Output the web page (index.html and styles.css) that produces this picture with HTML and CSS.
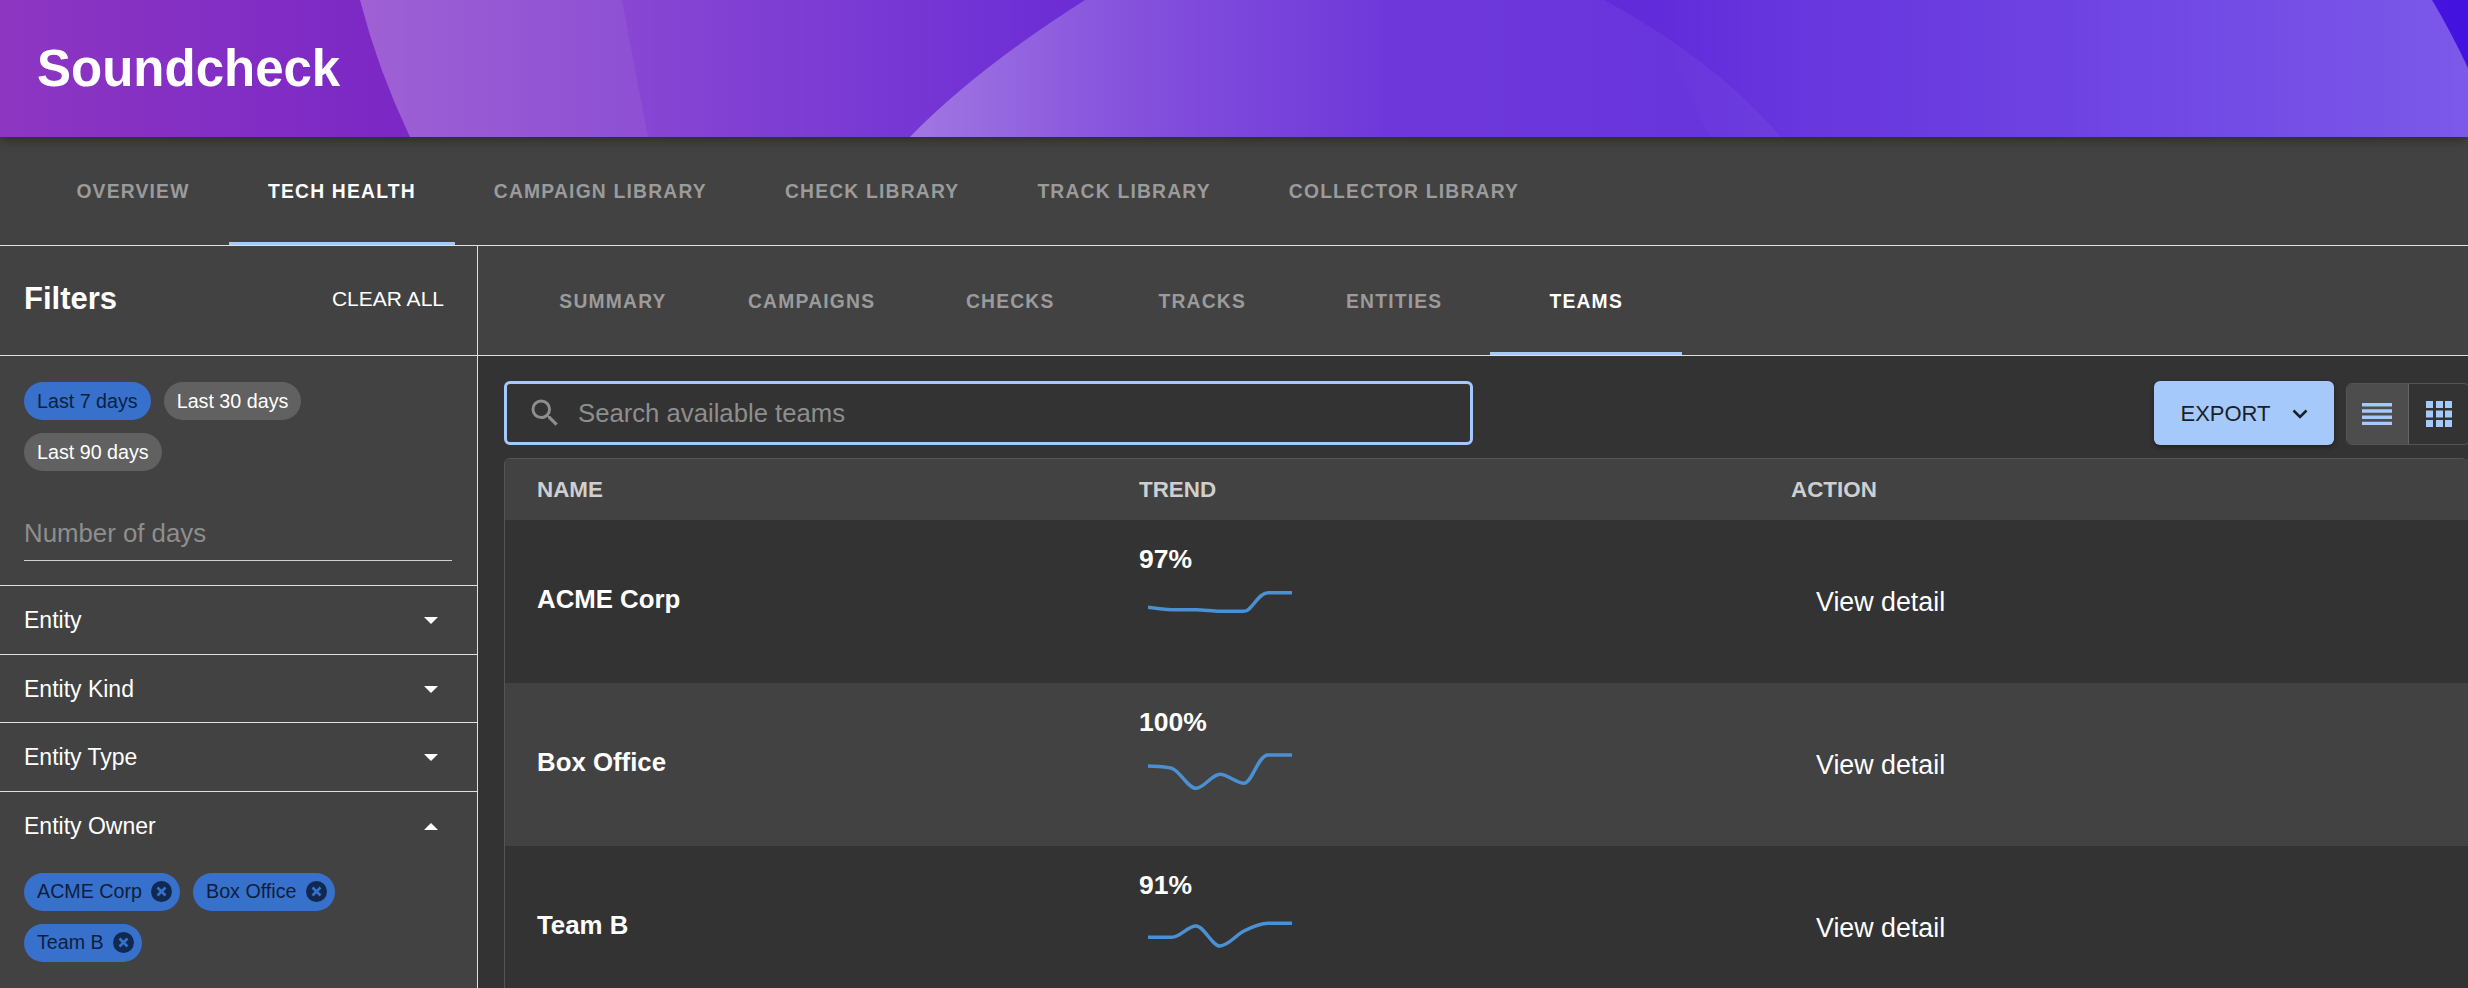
FILE: index.html
```html
<!DOCTYPE html>
<html lang="en">
<head>
    <meta charset="UTF-8">
    <title>Soundcheck</title>
    <link rel="stylesheet" href="styles.css">
</head>
<body>
    <!-- banner -->
    <header class="banner">
        <svg class="waves" viewBox="0 0 2468 137" preserveAspectRatio="none" aria-hidden="true">
            <defs>
                <linearGradient id="waveA" x1="0" y1="0" x2="1" y2="0">
                    <stop offset="0" stop-color="#fff" stop-opacity=".22"/>
                    <stop offset="1" stop-color="#fff" stop-opacity="0"/>
                </linearGradient>
                <linearGradient id="waveB" x1="0" y1="0" x2="1" y2="0">
                    <stop offset="0" stop-color="#fff" stop-opacity=".32"/>
                    <stop offset=".3" stop-color="#fff" stop-opacity=".16"/>
                    <stop offset=".55" stop-color="#fff" stop-opacity=".06"/>
                    <stop offset="1" stop-color="#fff" stop-opacity=".04"/>
                </linearGradient>
                <linearGradient id="waveC" x1="0" y1="0" x2="1" y2="0">
                    <stop offset="0" stop-color="#fff" stop-opacity="0"/>
                    <stop offset="1" stop-color="#fff" stop-opacity=".3"/>
                </linearGradient>
            </defs>
            <path d="M360 0 Q378 70 410 137 H1100 V0 Z" fill="url(#waveA)"/>
            <path d="M360 0 Q378 70 410 137 H648 Q635 70 622 0 Z" fill="#fff" fill-opacity=".06"/>
            <path d="M1085 0 Q975 70 910 137 H1781 Q1715 60 1604 0 Z" fill="url(#waveB)"/>
            <path d="M1655 0 Q1670 60 1710 137 H2468 V68 Q2450 30 2432 0 Z" fill="url(#waveC)"/>
        </svg>
        <h1 class="banner-title">Soundcheck</h1>
    </header>

    <!-- main tabs -->
    <nav class="tabs main-tabs">
        <a class="tab">Overview</a>
        <a class="tab active">Tech Health</a>
        <a class="tab">Campaign Library</a>
        <a class="tab">Check Library</a>
        <a class="tab">Track Library</a>
        <a class="tab">Collector Library</a>
    </nav>

    <div class="layout">
        <!-- filters -->
        <aside class="sidebar">
            <div class="filters-head">
                <h2 class="filters-title">Filters</h2>
                <button class="clear-btn">CLEAR ALL</button>
            </div>
            <div class="days-box">
                <div class="chips day-chips">
                    <span class="chip selected">Last 7 days</span>
                    <span class="chip">Last 30 days</span>
                    <span class="chip">Last 90 days</span>
                </div>
                <div class="days-input">Number of days</div>
            </div>
            <div class="acc-row"><span>Entity</span><i class="caret"></i></div>
            <div class="acc-row"><span>Entity Kind</span><i class="caret"></i></div>
            <div class="acc-row"><span>Entity Type</span><i class="caret"></i></div>
            <div class="acc-row open"><span>Entity Owner</span><i class="caret up"></i></div>
            <div class="chips owner-chips">
                <span class="chip selected">ACME Corp
                    <svg class="chip-x" viewBox="0 0 21 21"><circle cx="10.5" cy="10.5" r="10.5" fill="#12294f"/><path d="M6.5 6.5l8 8M14.5 6.5l-8 8" stroke="#3771cc" stroke-width="2.6"/></svg>
                </span>
                <span class="chip selected">Box Office
                    <svg class="chip-x" viewBox="0 0 21 21"><circle cx="10.5" cy="10.5" r="10.5" fill="#12294f"/><path d="M6.5 6.5l8 8M14.5 6.5l-8 8" stroke="#3771cc" stroke-width="2.6"/></svg>
                </span>
                <span class="chip selected">Team B
                    <svg class="chip-x" viewBox="0 0 21 21"><circle cx="10.5" cy="10.5" r="10.5" fill="#12294f"/><path d="M6.5 6.5l8 8M14.5 6.5l-8 8" stroke="#3771cc" stroke-width="2.6"/></svg>
                </span>
            </div>
        </aside>

        <main class="content">
            <nav class="tabs sub-tabs">
                <a class="tab">Summary</a>
                <a class="tab">Campaigns</a>
                <a class="tab">Checks</a>
                <a class="tab">Tracks</a>
                <a class="tab">Entities</a>
                <a class="tab active">Teams</a>
            </nav>

            <div class="toolbar">
                <div class="search">
                    <svg class="search-icon" viewBox="0 0 24 24"><path d="M15.5 14h-.79l-.28-.27A6.47 6.47 0 0 0 16 9.5 6.5 6.5 0 1 0 9.5 16c1.61 0 3.09-.59 4.23-1.57l.27.28v.79l5 4.99L20.49 19l-4.99-5zm-6 0C7.01 14 5 11.99 5 9.5S7.01 5 9.5 5 14 7.01 14 9.5 11.99 14 9.5 14z"/></svg>
                    <span>Search available teams</span>
                </div>
                <button class="export-btn">EXPORT
                    <svg class="export-arrow" viewBox="0 0 16 10"><path d="M1.5 1.5L8 8l6.5-6.5" fill="none" stroke="#1b1f26" stroke-width="2.6"/></svg>
                </button>
                <div class="view-toggle">
                    <div class="view-btn on">
                        <svg viewBox="0 0 30 22" width="30" height="22"><path d="M0 0h30v3.500H0zM0 6.200h30v3.500H0zM0 12.500h30v3.500H0zM0 18.700h30v3.500H0z" fill="#a5c9fa"/></svg>
                    </div>
                    <div class="view-btn">
                        <svg viewBox="0 0 26 26" width="26" height="26"><path d="M0 0h7v7H0zM10 0h7v7h-7zM19 0h7v7h-7zM0 9.500h7v7H0zM10 9.500h7v7h-7zM19 9.500h7v7h-7zM0 19h7v7H0zM10 19h7v7h-7zM19 19h7v7h-7z" fill="#a5c9fa"/></svg>
                    </div>
                </div>
            </div>

            <section class="table">
                <div class="row table-head">
                    <div>NAME</div>
                    <div>TREND</div>
                    <div>ACTION</div>
                </div>
                <div class="row team">
                    <div class="team-name">ACME Corp</div>
                    <div class="trend">
                        <div class="trend-num">97%</div>
                        <svg class="spark" viewBox="0 0 144 42"><path d="M0 18.300C8 19.500 16 20.700 24 20.700C32 20.700 40 20.700 48 20.700C56 20.700 64 22.300 72 22.300C80 22.300 88 22.300 96 22.300C104 22.300 110 3.700 120 3.700L144 3.700"/></svg>
                    </div>
                    <a class="detail">View detail</a>
                </div>
                <div class="row team">
                    <div class="team-name">Box Office</div>
                    <div class="trend">
                        <div class="trend-num">100%</div>
                        <svg class="spark" viewBox="0 0 144 42"><path d="M0 14C8 14.500 16 14.500 24 16.300C32 19 40 36.300 48 36.300C56 36.300 64 22.300 72 22.300C80 22.300 88 31.300 96 31.300C104 31.300 110 3 120 3L144 3"/></svg>
                    </div>
                    <a class="detail">View detail</a>
                </div>
                <div class="row team">
                    <div class="team-name">Team B</div>
                    <div class="trend">
                        <div class="trend-num">91%</div>
                        <svg class="spark" viewBox="0 0 144 42"><path d="M0 22.300L24 22.300C32 22.300 40 11 48 11C56 11 64 31 72 31C80 31 88 20 96 16C104 12 112 8.300 120 8.300L144 8.300"/></svg>
                    </div>
                    <a class="detail">View detail</a>
                </div>
            </section>
        </main>
    </div>
</body>
</html>
```

FILE: styles.css
```css
body,h1,h2{
    margin: 0;
    padding: 0;
}
body{
    height: 988px;
    overflow: hidden;
    background: #333;
    color: #fff;
    font-family: "Liberation Sans", Arial, sans-serif;
}

/* banner */
.banner{
    position: relative;
    z-index: 1;
    height: 137px;
    display: flex;
    align-items: center;
    padding-left: 37px;
    overflow: hidden;
    background: linear-gradient(90deg, #8d36c2 0, #7a27c6 420px, #6c2bd4 1000px, #5f2bdc 1800px, #4412e0 2468px);
    box-shadow: 0 3px 10px rgba(0,0,0,.35);
}
.waves{
    position: absolute;
    left: 0;
    top: 0;
    width: 100%;
    height: 100%;
}
.banner-title{
    position: relative;
    font-size: 51px;
    font-weight: 700;
}

/* tabs */
.tabs{
    display: flex;
    background: #424242;
}
.tab{
    min-width: 192px;
    box-sizing: border-box;
    padding: 4px 39px 0;
    display: flex;
    align-items: center;
    justify-content: center;
    font-size: 19.300px;
    font-weight: 700;
    letter-spacing: 1.200px;
    text-transform: uppercase;
    color: #9b9b9b;
    border-bottom: 3px solid transparent;
    white-space: nowrap;
}
.tab.active{
    color: #fff;
    border-bottom-color: #a5c9fa;
}
.main-tabs{
    height: 109px;
    box-sizing: border-box;
    padding-left: 37px;
    border-bottom: 1px solid #e0e0e0;
}
.sub-tabs{
    height: 110px;
    box-sizing: border-box;
    padding-left: 39px;
    border-bottom: 1px solid #e0e0e0;
}
.sub-tabs .tab{
    padding-top: 6px;
}

.layout{
    display: flex;
    height: 742px;
}

/* filters */
.sidebar{
    width: 478px;
    flex-shrink: 0;
    box-sizing: border-box;
    background: #424242;
    border-right: 1px solid #e0e0e0;
}
.filters-head{
    height: 110px;
    box-sizing: border-box;
    display: flex;
    align-items: center;
    justify-content: space-between;
    padding: 0 33px 4px 24px;
    border-bottom: 1px solid #e0e0e0;
}
.filters-title{
    font-size: 31px;
    font-weight: 700;
}
.clear-btn{
    background: none;
    border: 0;
    padding: 0;
    color: #fff;
    font-family: inherit;
    font-size: 21px;
}
.days-box{
    height: 230px;
    box-sizing: border-box;
    padding: 26px 24px 0;
    border-bottom: 1px solid #e0e0e0;
}
.chips{
    display: flex;
    flex-wrap: wrap;
    gap: 13px;
}
.day-chips{
    width: 300px;
}
.chip{
    height: 38px;
    box-sizing: border-box;
    padding: 0 13px;
    display: inline-flex;
    align-items: center;
    border-radius: 19px;
    background: #616161;
    font-size: 19.700px;
    white-space: nowrap;
}
.chip.selected{
    background: #3771cc;
    color: #0d1f3e;
}
.chip-x{
    width: 21px;
    height: 21px;
    margin-left: 9px;
    margin-right: -5px;
}
.days-input{
    margin-top: 44px;
    width: 428px;
    height: 46px;
    box-sizing: border-box;
    border-bottom: 1px solid #d0d0d0;
    font-size: 25.800px;
    line-height: 36px;
    color: #8e8e8e;
}
.acc-row{
    height: 68.500px;
    box-sizing: border-box;
    display: flex;
    align-items: center;
    justify-content: space-between;
    padding: 2px 39px 0 24px;
    font-size: 23px;
    border-bottom: 1px solid #e0e0e0;
}
.acc-row.open{
    height: 68px;
    padding-top: 1px;
    border-bottom: 0;
}
.caret{
    width: 0;
    height: 0;
    border-left: 7px solid transparent;
    border-right: 7px solid transparent;
    border-top: 7px solid #fff;
}
.caret.up{
    border-top: 0;
    border-bottom: 7px solid #fff;
}
.owner-chips{
    padding: 13px 24px 0;
    width: 400px;
}

/* content */
.content{
    flex: 1;
    min-width: 0;
    overflow: hidden;
}
.toolbar{
    display: flex;
    align-items: flex-end;
    gap: 12px;
    height: 64px;
    padding: 25px 0 0 26px;
    margin-right: -2px;
}
.search{
    width: 969px;
    height: 64px;
    box-sizing: border-box;
    margin-right: auto;
    display: flex;
    align-items: center;
    border: 3px solid #a5c9fa;
    border-radius: 6px;
    padding-left: 20px;
    font-size: 25.700px;
    color: #8e8e8e;
}
.search-icon{
    width: 36px;
    height: 36px;
    margin-right: 15px;
    fill: #8e8e8e;
}
.export-btn{
    width: 180px;
    height: 64px;
    display: flex;
    align-items: center;
    justify-content: center;
    gap: 21px;
    border: 0;
    border-radius: 6px;
    padding-top: 2px;
    background: #a5c9fa;
    color: #1b1f26;
    font-family: inherit;
    font-size: 22px;
    box-shadow: 0 2px 5px rgba(0,0,0,.4);
}
.export-arrow{
    width: 16px;
    height: 10px;
}
.view-toggle{
    display: flex;
    height: 62px;
    width: 124px;
    flex-shrink: 0;
    box-sizing: border-box;
    border: 1px solid #555;
    border-radius: 6px;
    overflow: hidden;
}
.view-btn{
    flex: 1;
    display: flex;
    align-items: center;
    justify-content: center;
}
.view-btn.on{
    background: #4d4d4d;
    border-right: 1px solid #666;
}

/* table */
.table{
    margin: 13px 0 0 26px;
    border: 1px solid #555;
    border-right: 0;
    border-radius: 6px 6px 0 0;
}
.row{
    display: grid;
    grid-template-columns: 602px 652px 1fr;
    padding-left: 32px;
}
.table-head{
    height: 61px;
    align-items: center;
    background: #424242;
    font-size: 22.400px;
    font-weight: 700;
    color: #cfcfcf;
}
.team{
    height: 163px;
    background: #333;
}
.team:nth-child(odd){
    background: #424242;
}
.team-name{
    padding-top: 65px;
    font-size: 25.800px;
    font-weight: 700;
}
.trend{
    padding-top: 24px;
}
.trend-num{
    font-size: 26.500px;
    font-weight: 700;
    line-height: 30px;
}
.spark{
    display: block;
    width: 144px;
    height: 42px;
    margin: 15px 0 0 9px;
}
.spark path{
    fill: none;
    stroke: #4a90d2;
    stroke-width: 3.500;
}
.detail{
    padding: 67px 0 0 25px;
    font-size: 26.800px;
}
```
